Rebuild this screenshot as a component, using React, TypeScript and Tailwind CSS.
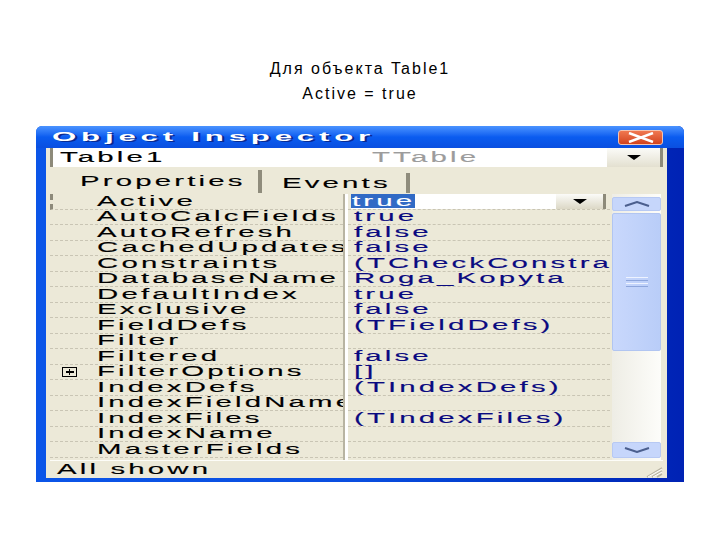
import type { ReactNode } from 'react';

// stretched "pixel" text like the scaled screenshot of the inspector
function W({ children, className = '' }: { children: ReactNode; className?: string }) {
  return (
    <span
      className={`inline-block origin-left scale-x-[2.1] tracking-[1.5px] whitespace-nowrap [-webkit-text-stroke:0.12px_currentColor] ${className}`}
    >
      {children}
    </span>
  );
}

const ROWS: { name: string; value: string; plus?: boolean }[] = [
  { name: 'Active', value: 'true' },
  { name: 'AutoCalcFields', value: 'true' },
  { name: 'AutoRefresh', value: 'false' },
  { name: 'CachedUpdates', value: 'false' },
  { name: 'Constraints', value: '(TCheckConstraints)' },
  { name: 'DatabaseName', value: 'Roga_Kopyta' },
  { name: 'DefaultIndex', value: 'true' },
  { name: 'Exclusive', value: 'false' },
  { name: 'FieldDefs', value: '(TFieldDefs)' },
  { name: 'Filter', value: '' },
  { name: 'Filtered', value: 'false' },
  { name: 'FilterOptions', value: '[]', plus: true },
  { name: 'IndexDefs', value: '(TIndexDefs)' },
  { name: 'IndexFieldNames', value: '' },
  { name: 'IndexFiles', value: '(TIndexFiles)' },
  { name: 'IndexName', value: '' },
  { name: 'MasterFields', value: '' },
];

function DownTriangle() {
  return (
    <svg width="14" height="5" viewBox="0 0 14 5">
      <polygon points="0,0 14,0 7,5" fill="#000" />
    </svg>
  );
}

export default function App() {
  return (
    <div className="w-[720px] h-[540px] bg-white overflow-hidden font-['Liberation_Sans',Arial,sans-serif]">
      {/* Caption */}
      <div className="pt-[56px] text-center text-[16px] leading-[25px] tracking-[2px] text-black">
        <p>Для объекта Table1</p>
        <p>Active = true</p>
      </div>

      {/* Object Inspector window */}
      <div className="ml-[36px] mt-[20px] w-[648px] h-[356px] flex flex-col rounded-t-[6px] bg-gradient-to-r from-[#0b55e8] via-[#0a4ee0] to-[#0022b4]">
        {/* Title bar */}
        <div className="h-[22px] flex items-center pl-[16px] pr-[21px] rounded-t-[6px] bg-gradient-to-b from-[#4a93ff] via-[#0a5cf0] to-[#0a4fe0]">
          <span className="flex-1 text-white font-bold text-[13px]">
            <span className="inline-block origin-left scale-x-[2.4] tracking-[2px] whitespace-nowrap [text-shadow:1px_1px_#0a2a90]">
              Object Inspector
            </span>
          </span>
          <div className="w-[45px] h-[15px] rounded-[3px] border border-[#f4c4b0] bg-gradient-to-b from-[#f07850] to-[#d2421c] flex items-center justify-center">
            <svg width="28" height="11" viewBox="0 0 28 11">
              <path d="M2 1 L26 10 M26 1 L2 10" stroke="#fff" strokeWidth="2.5" />
            </svg>
          </div>
        </div>

        {/* Body */}
        <div className="ml-[10px] mr-[17px] mb-[4px] flex-1 bg-[#ece9d8] px-[4px] flex flex-col text-[14px] leading-[15px]">
          {/* Object combo */}
          <div className="h-[19px] flex border-l-[3px] border-[#8d8a7a] bg-white">
            <div className="w-[319px] pl-[7px] flex items-center text-black">
              <W>Table1</W>
            </div>
            <div className="flex-1 flex items-center text-[#9c9c9c]">
              <W>TTable</W>
            </div>
            <div className="w-[56px] flex items-center justify-center bg-gradient-to-b from-[#fbfbf8] to-[#e3e0d0] border-r-[3px] border-[#8d8a7a]">
              <DownTriangle />
            </div>
          </div>

          {/* Tabs */}
          <div className="mt-[3px] h-[23px] flex text-black">
            <div className="w-[212px] pl-[30px] flex items-center border-r-[4px] border-[#8f8c7c]">
              <W>Properties</W>
            </div>
            <div className="w-[147px] ml-[1px] mt-[3px] pl-[19px] flex items-center border-r-[4px] border-[#8f8c7c]">
              <W>Events</W>
            </div>
          </div>

          {/* Property grid */}
          <div className="mt-[1px] h-[266px] flex">
            <div className="w-[295px] flex flex-col border-r-2 border-[#b8b4a2]">
              {ROWS.map((r, i) => (
                <div
                  key={r.name}
                  className={`h-[15.5px] shrink-0 flex items-center overflow-hidden border-b border-dashed border-[#c9c5b4] text-black ${
                    i === 0 ? 'border-l-[3px] border-l-[#8d8a7a] pl-[9px]' : 'pl-[12px]'
                  }`}
                >
                  <div className="w-[35px] shrink-0 flex items-center">
                    {r.plus && (
                      <div className="w-[15px] h-[10px] border-[1.5px] border-black flex items-center justify-center relative">
                        <div className="w-[8px] h-[1.5px] bg-black" />
                        <div className="absolute w-[1.5px] h-[6px] bg-black" />
                      </div>
                    )}
                  </div>
                  <W>{r.name}</W>
                </div>
              ))}
            </div>
            <div className="w-[3px] bg-white" />
            <div className="w-[262px] flex flex-col">
              {ROWS.map((r, i) =>
                i === 0 ? (
                  <div key={r.name} className="h-[15.5px] shrink-0 flex border-b border-dashed border-[#c9c5b4]">
                    <div className="flex-1 ml-[3px] bg-white flex items-center">
                      <div className="w-[64px] h-[14px] bg-[#316ac5] text-white flex items-center pl-[1px]">
                        <W>{r.value}</W>
                      </div>
                    </div>
                    <div className="w-[50px] mr-[4px] flex items-center justify-center bg-gradient-to-b from-[#fbfbf8] to-[#dcd8c6] border-r-[3px] border-[#8d8a7a]">
                      <DownTriangle />
                    </div>
                  </div>
                ) : (
                  <div
                    key={r.name}
                    className="h-[15.5px] shrink-0 flex items-center pl-[6px] overflow-hidden border-b border-dashed border-[#c9c5b4] text-[#0a0a80]"
                  >
                    <W>{r.value}</W>
                  </div>
                ),
              )}
            </div>
            {/* Scrollbar */}
            <div className="ml-[2px] w-[49px] flex flex-col pt-[3px] pb-[2px] bg-gradient-to-r from-[#eeede5] to-[#fdfdfa]">
              <div className="h-[14px] rounded-[2px] border border-[#b7c9f3] bg-[#c6d6fb] flex items-center justify-center">
                <svg width="26" height="6" viewBox="0 0 26 6">
                  <polyline points="1,5 13,1 25,5" fill="none" stroke="#4b5f8e" strokeWidth="2" />
                </svg>
              </div>
              <div className="mt-[2px] h-[138px] rounded-[2px] border border-[#b1c5f1] bg-gradient-to-r from-[#c9d8fc] to-[#b9cdf8] flex flex-col items-center justify-center gap-[2px]">
                <div className="w-[22px] h-[1px] bg-[#eef3ff]" />
                <div className="w-[22px] h-[1px] bg-[#8ea6dc]" />
                <div className="w-[22px] h-[1px] bg-[#eef3ff]" />
                <div className="w-[22px] h-[1px] bg-[#8ea6dc]" />
              </div>
              <div className="flex-1" />
              <div className="h-[16px] rounded-[2px] border border-[#b7c9f3] bg-[#c6d6fb] flex items-center justify-center">
                <svg width="26" height="6" viewBox="0 0 26 6">
                  <polyline points="1,1 13,5 25,1" fill="none" stroke="#4b5f8e" strokeWidth="2" />
                </svg>
              </div>
            </div>
          </div>

          {/* Status bar */}
          <div className="h-[18px] flex items-center border-t border-[#fdfdf8] pl-[7px] text-black">
            <div className="flex-1">
              <W>All shown</W>
            </div>
            <svg width="22" height="16" viewBox="0 0 22 16">
              <path d="M6 15 L21 6 M11 15 L21 9 M16 15 L21 12" stroke="#b8b4a2" strokeWidth="1.5" />
              <path d="M7 15 L21 7 M12 15 L21 10" stroke="#ffffff" strokeWidth="1" />
            </svg>
          </div>
        </div>
      </div>
    </div>
  );
}
